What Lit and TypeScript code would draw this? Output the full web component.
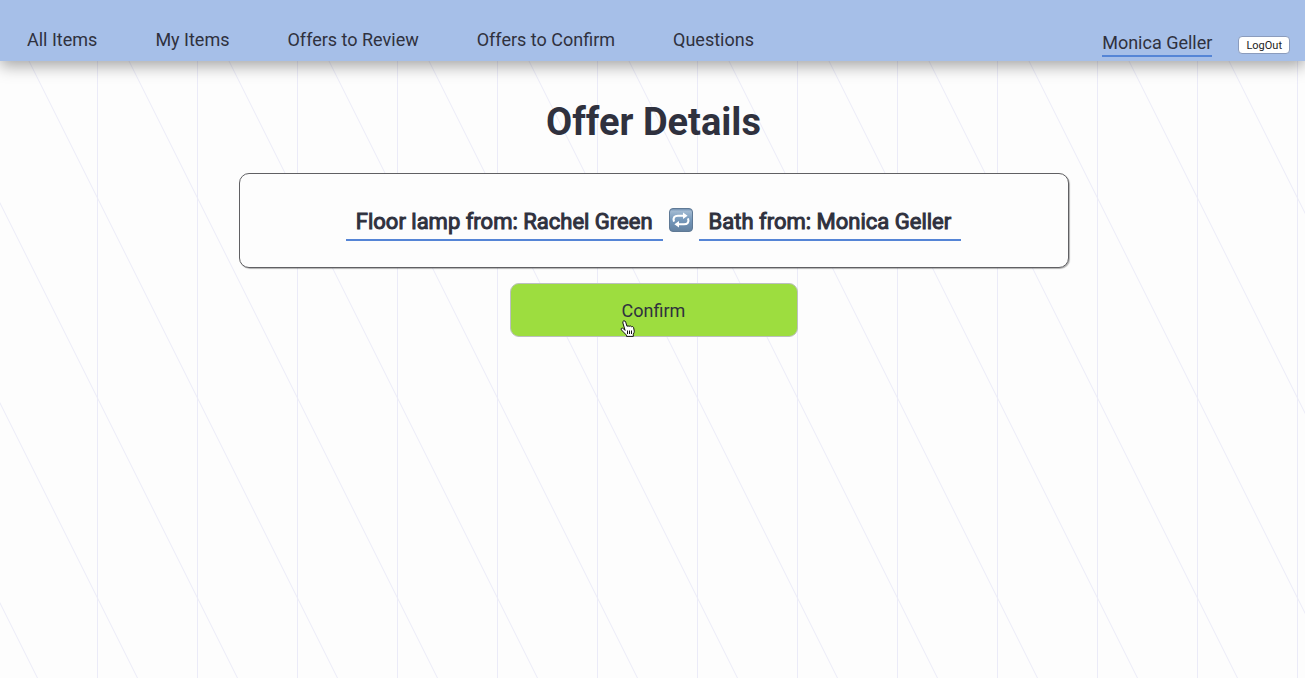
import { LitElement, html, css } from "lit";
import { customElement } from "lit/decorators.js";

@customElement("app-root")
export class AppRoot extends LitElement {
  static styles = css`
    :host {
      display: block;
      position: relative;
      min-height: 100vh;
      font-family: Roboto, "Liberation Sans", sans-serif;
      color: #2f313e;
      background-color: #fdfdfd;
      background-image: url("data:image/svg+xml,%3Csvg xmlns='http://www.w3.org/2000/svg' width='100' height='200'%3E%3Cg fill='none' stroke='%23ebebf8'%3E%3Cpath d='M.5 0V200'/%3E%3Cpath d='M-100 0L0 200M-1-2L101 202M99-2L201 202'/%3E%3C/g%3E%3C/svg%3E");
      background-size: 100px 200px;
      background-position: 97px 197px;
    }
    a {
      color: inherit;
      text-decoration: none;
    }
    .header {
      display: flex;
      justify-content: space-between;
      align-items: flex-end;
      box-sizing: border-box;
      height: 61px;
      padding: 0 15px 4px 27px;
      background: #a6bfe8;
      box-shadow: 0 5px 15px rgba(0, 0, 0, 0.35);
      font-size: 18px;
      line-height: 24px;
    }
    .nav {
      display: flex;
      gap: 58px;
      padding-bottom: 5px;
    }
    .account {
      display: flex;
      align-items: flex-end;
      gap: 26px;
    }
    .user {
      border-bottom: 2px solid #5585d6;
    }
    .logout {
      box-sizing: border-box;
      height: 18px;
      margin: 0 0 3px;
      padding: 1px 7px 0;
      border: 1px solid #8b9cbd;
      border-radius: 4px;
      background: #fff;
      color: #222;
      font: 11px/15px Roboto, sans-serif;
    }
    .main {
      display: flex;
      flex-direction: column;
      align-items: center;
      padding: 37px 24px 24px 26px;
    }
    .title {
      margin: 0 0 27px;
      font-size: 38px;
      line-height: 48px;
      font-weight: 700;
    }
    .card {
      box-sizing: border-box;
      display: flex;
      flex-wrap: wrap;
      justify-content: center;
      align-items: center;
      width: 100%;
      max-width: 830px;
      padding: 28px 24px 26px;
      border: 1px solid #606063;
      border-radius: 10px;
      background: #fdfdfd;
      box-shadow: 1px 1px 1px rgba(0, 0, 0, 0.3);
      font-size: 22px;
      line-height: 35px;
      -webkit-text-stroke: 1px #2f313e;
    }
    .item {
      padding: 2px 10px 0;
      border-bottom: 2px solid #5585d6;
    }
    .swap {
      width: 24px;
      height: 24px;
      margin: 0 6px 4px;
    }
    .confirm {
      position: relative;
      width: 288px;
      height: 54px;
      margin: 15px 0 0;
      padding: 2px 0 0;
      border: 1px solid #bcbfc0;
      border-radius: 9px;
      background: #9ddd3f;
      color: #2f313e;
      font: 18px/24px Roboto, sans-serif;
    }
    .pointer {
      position: absolute;
      left: 109px;
      top: 36px;
      width: 16px;
      height: 18px;
    }
  `;

  render() {
    return html`
      <header class="header">
        <nav class="nav">
          ${["All Items", "My Items", "Offers to Review", "Offers to Confirm", "Questions"].map(
            (label) => html`<a href="#">${label}</a>`
          )}
        </nav>
        <div class="account">
          <a class="user" href="#">Monica Geller</a>
          <button class="logout" type="button">LogOut</button>
        </div>
      </header>
      <main class="main">
        <h1 class="title">Offer Details</h1>
        <section class="card">
          <a class="item" href="#">Floor lamp from: Rachel Green</a>
          <svg class="swap" viewBox="0 0 24 24" role="img" aria-label="exchanged for">
            <defs>
              <linearGradient id="tile" x2="0" y2="1">
                <stop offset="0" stop-color="#6c8bae" />
                <stop offset=".12" stop-color="#a1b9d1" />
                <stop offset=".5" stop-color="#7598bb" />
                <stop offset="1" stop-color="#64819f" />
              </linearGradient>
            </defs>
            <rect x=".5" y=".5" width="23" height="23" rx="3.5" fill="url(#tile)" stroke="#5f7995" />
            <g fill="none" stroke="#fff" stroke-width="2.1">
              <path d="M5 13.6C3.6 9.8 5.6 7.7 9 7.7H14.8" />
              <path d="M19 10.4C20.4 14.2 18.4 16.3 15 16.3H9.2" />
            </g>
            <path fill="#fff" d="M14 4.6L18.6 7.8L14 11ZM10 13L5.4 16.2L10 19.4Z" />
          </svg>
          <a class="item" href="#">Bath from: Monica Geller</a>
        </section>
        <button class="confirm" type="button">
          Confirm
          <svg class="pointer" viewBox="0 0 16 18" aria-hidden="true">
            <path
              d="M5.1 10.4L2.9 3Q2.5 1.1 3.8.8Q5.1.5 5.7 2.2L7 6.3Q7.9 5.3 9.1 6.3Q10.3 5.3 11.4 6.7Q12.9 6 13.6 7.6L14.3 11.2Q14.3 12.5 13.3 14.2V16.4H6.5V15.2L4.3 12.9L1.4 9.9Q.6 8.7 1.7 8.2Q2.7 7.8 3.7 8.9Z"
              fill="#fff" stroke="#111" stroke-linejoin="round"
            />
            <path d="M7.5 10.5V14M9.5 10.5V14M11.5 10.5V14" stroke="#111" />
          </svg>
        </button>
      </main>
    `;
  }
}
